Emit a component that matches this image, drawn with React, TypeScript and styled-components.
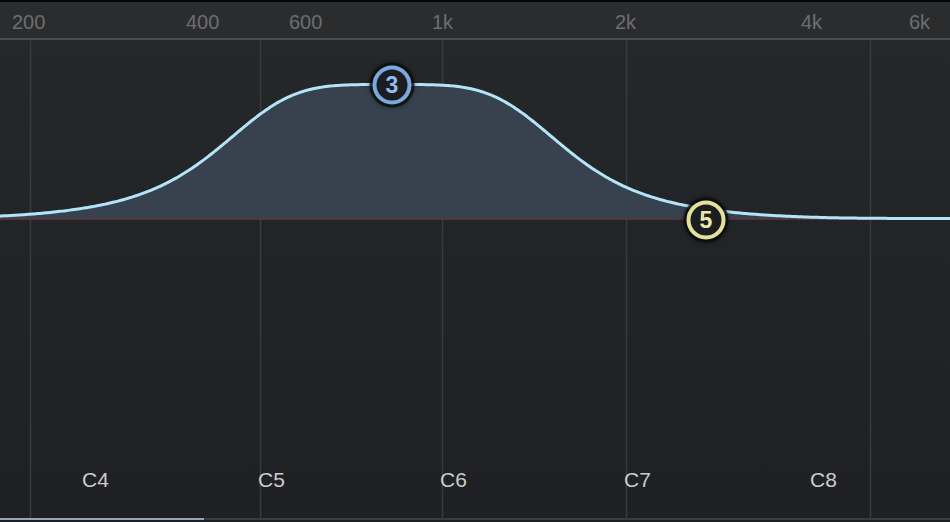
import styled, { createGlobalStyle } from 'styled-components';

const GlobalStyle = createGlobalStyle`
  html, body {
    margin: 0;
    padding: 0;
    background: #000;
  }
  body {
    font-family: 'Liberation Sans', Arial, sans-serif;
  }
`;

const freqLabels = [
  { text: '200', left: 12 },
  { text: '400', left: 186 },
  { text: '600', left: 289 },
  { text: '1k', left: 432 },
  { text: '2k', left: 615 },
  { text: '4k', left: 801 },
  { text: '6k', left: 909 },
];

const noteLabels = [
  { text: 'C4', left: 82 },
  { text: 'C5', left: 258 },
  { text: 'C6', left: 440 },
  { text: 'C7', left: 624 },
  { text: 'C8', left: 810 },
];

const gridLines = [30, 260, 442, 626, 870];

const PLOT_TOP = 40;
const BASELINE = 219;

// bell band 3: flat-topped response, centre x 392, gain 134px
const CURVE_FLOOR = 218.5;
const GAIN = 134;
const CENTER = 392;
const WIDTH = 178;

const response = (x: number) => {
  const d = Math.abs(x - CENTER);
  const bell = 1 / (1 + Math.pow(d / WIDTH, 4.2));
  const tail = Math.exp(-Math.pow(d / 420, 6));
  return CURVE_FLOOR - GAIN * bell * tail;
};

const buildCurve = () => {
  const pts: string[] = [];
  for (let x = -10; x <= 960; x += 2) {
    pts.push(`${x} ${response(x).toFixed(2)}`);
  }
  return `M ${pts.join(' L ')}`;
};

const curvePath = buildCurve();
const fillPath = `${curvePath} L 960 ${BASELINE} L -10 ${BASELINE} Z`;

const bands = [
  { id: 3, x: 392, y: 85, ring: '#7ba9dd', digit: '#93bcec' },
  { id: 5, x: 706, y: 220, ring: '#e4e19a', digit: '#ece8aa' },
];

const App = () => {
  return (
    <>
      <GlobalStyle />
      <Root>
        <TopEdge />
        <Ruler>
          {freqLabels.map((l) => (
            <FreqLabel key={l.text} style={{ left: l.left }}>
              {l.text}
            </FreqLabel>
          ))}
        </Ruler>
        <Divider />
        <Plot>
          <Chart width={950} height={478} viewBox={`0 ${PLOT_TOP} 950 478`}>
            {gridLines.map((x) => (
              <line key={x} x1={x + 0.5} x2={x + 0.5} y1={PLOT_TOP} y2={518} stroke="#393a3d" strokeWidth={1.5} />
            ))}
            <path d={fillPath} fill="#38424e" />
            <line x1={0} x2={950} y1={BASELINE} y2={BASELINE} stroke="#5b3b3e" strokeWidth={1.5} />
            <path d={curvePath} fill="none" stroke="#b2e5f9" strokeWidth={3} strokeLinejoin="round" />
          </Chart>
          {noteLabels.map((n) => (
            <NoteLabel key={n.text} style={{ left: n.left }}>
              {n.text}
            </NoteLabel>
          ))}
          {bands.map((b) => (
            <Handle
              key={b.id}
              $ring={b.ring}
              $digit={b.digit}
              style={{ left: b.x, top: b.y - PLOT_TOP }}
            >
              {b.id}
            </Handle>
          ))}
        </Plot>
        <ScrollTrack>
          <ScrollThumb />
        </ScrollTrack>
        <BottomEdge />
      </Root>
    </>
  );
};

export default App;

const Root = styled.div`
  width: 950px;
  height: 522px;
  display: flex;
  flex-direction: column;
  overflow: hidden;
  background: #222326;
`;

const TopEdge = styled.div`
  height: 2px;
  background: #050505;
`;

const Ruler = styled.div`
  position: relative;
  height: 36px;
  background: #2b2c2e;
`;

const FreqLabel = styled.span`
  position: absolute;
  top: 0;
  line-height: 40px;
  font-size: 20px;
  color: #6c6e71;
  white-space: nowrap;
`;

const Divider = styled.div`
  height: 2px;
  background: #4a4b4e;
`;

const Plot = styled.div`
  position: relative;
  flex: 1;
  background: linear-gradient(180deg, #262729 0%, #222326 55%, #1f2023 100%);
`;

const Chart = styled.svg`
  display: block;
`;

const NoteLabel = styled.span`
  position: absolute;
  top: 428px;
  line-height: 24px;
  font-size: 21px;
  color: #cbcccd;
  white-space: nowrap;
`;

const Handle = styled.div<{ $ring: string; $digit: string }>`
  position: absolute;
  width: 31px;
  height: 31px;
  transform: translate(-50%, -50%);
  border: 4px solid ${(p) => p.$ring};
  border-radius: 50%;
  background: #1b1d21;
  box-shadow: 0 0 0 3px rgba(10, 11, 13, 0.75), 0 0 5px 3px rgba(0, 0, 0, 0.45);
  display: flex;
  align-items: center;
  justify-content: center;
  color: ${(p) => p.$digit};
  font-size: 23px;
  font-weight: 700;
  line-height: 1;
`;

const ScrollTrack = styled.div`
  height: 2px;
  background: #3a3b3e;
`;

const ScrollThumb = styled.div`
  width: 204px;
  height: 100%;
  background: #93a6ba;
`;

const BottomEdge = styled.div`
  height: 2px;
  background: #1d1e21;
`;
